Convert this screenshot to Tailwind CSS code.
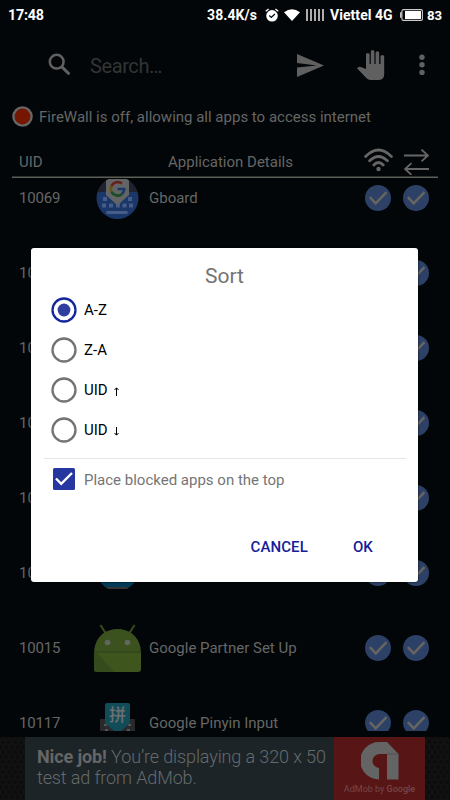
<!DOCTYPE html>
<html lang="en">
<head>
<meta charset="utf-8">
<title>FireWall</title>
<script src="https://cdn.jsdelivr.net/npm/@tailwindcss/browser@4"></script>
</head>
<body class="bg-[#020608]">
<svg class="hidden">
  <symbol id="check" viewBox="0 0 26 26"><circle cx="13" cy="13" r="13" fill="#2d4065"/><path d="M4.800 12.200l5.900 6.200L21.500 7.200" fill="none" stroke="#666561" stroke-width="2.500"/></symbol>
</svg>
<div class="relative flex h-[800px] w-[450px] flex-col overflow-hidden bg-[#020608] font-[Roboto,sans-serif] text-[15px] text-[#666]">
  <header class="flex h-[30px] shrink-0 items-center justify-between pl-2 pr-[8px] pt-[1px] text-[14px] font-bold text-white">
    <span class="w-9 text-[14.3px] tracking-[-0.2px]">17:48</span>
    <div class="flex items-center">
      <span class="w-[58px] text-[14px] tracking-[0.1px] whitespace-nowrap">38.4K/s</span>
      <svg class="-mt-[1px] h-[14px] w-[14px]" viewBox="0 0 14 14"><circle cx="7" cy="7.8" r="5.8" fill="#fff"/><path d="M.7 3.2L3.6 1M13.300 3.2L10.4 1" stroke="#fff" stroke-width="1.3"/><path d="M4.3 7.6l2 1.8 3.6-3.3" stroke="#020608" stroke-width="1.3" fill="none"/></svg>
      <svg class="-mt-[2px] ml-[5px] h-3 w-4" viewBox="0 0 16 12"><path d="M0 3.2Q8-2.8 16 3.2L8 12z" fill="#fff"/></svg>
      <svg class="-mt-[2px] ml-[6px] h-3 w-[18px]" viewBox="0 0 18 12"><path d="M1 0v12M5 0v12M9 0v12M13 0v12M17 0v12" stroke="#ccc" stroke-width="1.7"/></svg>
      <span class="ml-[6px] w-[65px] text-[14px] tracking-[0.05px] whitespace-nowrap">Viettel 4G</span>
      <svg class="-mt-[2px] ml-[5px] h-3 w-[23px]" viewBox="0 0 23 12"><rect x="1.9" y=".6" width="20.5" height="10.8" rx="1.5" fill="none" stroke="#ccc" stroke-width="1.1"/><path d="M.8 3.3v5.4" stroke="#ccc" stroke-width="1.5"/><rect x="5" y="2" width="16" height="8" fill="#fff"/></svg>
      <span class="ml-1 w-[15px] text-[13.2px]">83</span>
    </div>
  </header>
  <nav class="flex h-[70px] shrink-0 items-center pl-12">
    <svg class="-mt-[1px] h-[23px] w-[23px]" viewBox="0 0 23 23" fill="none" stroke="#606060"><circle cx="8.7" cy="8.7" r="6.9" stroke-width="2.5"/><path d="M13.6 13.6l7.8 7.7" stroke-width="3"/></svg>
    <span class="ml-[19px] mt-[2px] w-[207px] text-[20px] tracking-[-0.4px] text-[#323435]">Search…</span>
    <svg class="h-[23px] w-[27px]" viewBox="0 0 26 23" preserveAspectRatio="none"><path d="M0 0L26 11.5 0 23V13.5l19-2L0 9z" fill="#606060"/></svg>
    <svg class="ml-[33px] h-[30px] w-[28px]" viewBox="0 0 28 30"><path d="M9 19V4.8a1.8 1.8 0 0 1 3.6 0V14h1.2V1.8a1.8 1.8 0 0 1 3.6 0V14h1.2V3a1.8 1.8 0 0 1 3.6 0v11h1.3V6.9a1.8 1.8 0 0 1 3.7 0V24q0 6-6 6h-7.7q-2.400 0-4.200-2L0 18.3l1.2-1.100q1.200-.8 2.500-.2z" fill="#606060"/></svg>
    <svg class="ml-[34px] h-[22px] w-[6px]" viewBox="0 0 6 22" fill="#606060"><circle cx="3" cy="3.2" r="2.7"/><circle cx="3" cy="10.8" r="2.7"/><circle cx="3" cy="18.4" r="2.7"/></svg>
  </nav>
  <div class="flex h-[34px] shrink-0 items-center pl-3">
    <svg class="-mt-[2px] h-[21px] w-[21px]" viewBox="0 0 21 21"><circle cx="10.500" cy="10.500" r="9.100" fill="#751600" stroke="#666" stroke-width="2.400"/></svg>
    <span class="ml-[6px] mt-[1px] whitespace-nowrap text-[15px]">FireWall is off, allowing all apps to access internet</span>
  </div>
  <div class="mx-3 flex h-[44px] w-[426px] shrink-0 items-end border-b-[1px] border-[#5e5e59] shadow-[0_-0.5px_0_#5e5e59_inset]">
    <span class="ml-[7px] mb-[4px] w-[149px]">UID</span>
    <span class="mb-[4px] w-[196px]">Application Details</span>
    <svg class="mb-[5px] h-[24px] w-[29px]" viewBox="0 0 29 24" fill="none" stroke="#666" stroke-width="2.8" stroke-linecap="round"><path d="M1.6 8.500Q14.500-4.400 27.400 8.500M5.600 12.800Q14.500 4 23.400 12.800M9.800 17Q14.500 12 19.200 17"/><circle cx="14.500" cy="21" r="2.200" fill="#666" stroke="none"/></svg>
    <svg class="mb-[2px] ml-[11px] h-[26px] w-[25px]" viewBox="0 0 25 26" fill="none" stroke="#666" stroke-width="1.8"><path d="M0 6.500h24M17.500.6l6.400 5.900-6.400 5.900M25 20H1M7.500 14.100L1.100 20l6.400 5.900"/></svg>
  </div>
  <main class="mt-[1px] h-[552px] shrink-0 overflow-hidden">
    <div class="-mt-[19px] flex flex-col">
      <div class="flex h-[75px] items-center pl-[19px]">
        <span class="mt-[2px] w-[75px] tracking-[-0.2px]">10069</span>
        <svg class="h-[42px] w-[47px]" viewBox="0 0 47 42"><defs><clipPath id="gb"><circle cx="23.500" cy="21" r="21"/></clipPath></defs><g clip-path="url(#gb)"><path d="M0 0h47v15H0z" fill="#20232f"/><path d="M0 15h47v30H0z" fill="#1b3769"/><g fill="#465d88"><path d="M9 20h4v4H9zM34 20h4v4h-4zM8 26.500h4v4H8zM15 26.500h4v4h-4zM22 26.500h4v4h-4zM28.500 26.500h4v4h-4zM35 26.500h4v4h-4zM12.500 34h21v3h-21z"/></g><path d="M12 0h23v18L23.500 28.500 12 18z" fill="#636466"/></g><g fill="none" stroke-width="2.700"><path d="M17.500 9a7 7 0 0 1 10.500-2.500" stroke="#65201b"/><path d="M17.500 9a7 7 0 0 0 0 6" stroke="#665017"/><path d="M17.500 15a7 7 0 0 0 10.500 2" stroke="#174d27"/><path d="M28 17q2.300-2 2.200-5H23.500" stroke="#1b3868"/></g></svg>
        <span class="ml-[8px] mt-[2px] w-[216px]">Gboard</span>
        <svg class="h-[26px] w-[26px]"><use href="#check"/></svg><svg class="ml-[12px] h-[26px] w-[26px]"><use href="#check"/></svg>
      </div>
      <div class="flex h-[75px] items-center pl-[19px]"><span class="mt-[2px] w-[346px]">10070</span><svg class="h-[26px] w-[26px]"><use href="#check"/></svg><svg class="ml-[12px] h-[26px] w-[26px]"><use href="#check"/></svg></div>
      <div class="flex h-[75px] items-center pl-[19px]"><span class="mt-[2px] w-[346px]">10071</span><svg class="h-[26px] w-[26px]"><use href="#check"/></svg><svg class="ml-[12px] h-[26px] w-[26px]"><use href="#check"/></svg></div>
      <div class="flex h-[75px] items-center pl-[19px]"><span class="mt-[2px] w-[346px]">10072</span><svg class="h-[26px] w-[26px]"><use href="#check"/></svg><svg class="ml-[12px] h-[26px] w-[26px]"><use href="#check"/></svg></div>
      <div class="flex h-[75px] items-center pl-[19px]"><span class="mt-[2px] w-[346px]">10073</span><svg class="h-[26px] w-[26px]"><use href="#check"/></svg><svg class="ml-[12px] h-[26px] w-[26px]"><use href="#check"/></svg></div>
      <div class="flex h-[75px] items-center pl-[19px]">
        <span class="mt-[2px] w-[75px]">10074</span>
        <svg class="h-[36px] w-[47px]" viewBox="0 0 47 36"><path d="M7 18h33v9q0 1-7 7H14q-7-6-7-7z" fill="#353535"/><path d="M7 8h33v20l-4 4H11l-4-4z" fill="#003a57"/></svg>
        <span class="w-[224px]"></span>
        <svg class="h-[26px] w-[26px]"><use href="#check"/></svg><svg class="ml-[12px] h-[26px] w-[26px]"><use href="#check"/></svg>
      </div>
      <div class="flex h-[75px] items-center pl-[19px]">
        <span class="mt-[2px] w-[75px] tracking-[-0.2px]">10015</span>
        <svg class="h-[48px] w-[47px]" viewBox="0 0 47 48"><path d="M6.500 1l5 8M40.500 1l-5 8" stroke="#384b1d" stroke-width="2"/><path d="M0 28Q.5 16 9 9.500 15.500 5 23.500 5T38 9.500Q46.500 16 47 28z" fill="#3c521e"/><path d="M0 28h47v17q0 3-3 3H3q-3 0-3-3z" fill="#3e551e"/><path d="M3 29l17 19H3q-3 0-3-3V29z" fill="#364b1c"/><path d="M0 28h47" stroke="#2d3e18"/><circle cx="13.500" cy="18.500" r="2.800" fill="#626560"/><circle cx="33.500" cy="18.500" r="2.800" fill="#626560"/></svg>
        <span class="ml-[8px] mt-[2px] w-[216px]">Google Partner Set Up</span>
        <svg class="h-[26px] w-[26px]"><use href="#check"/></svg><svg class="ml-[12px] h-[26px] w-[26px]"><use href="#check"/></svg>
      </div>
      <div class="flex h-[75px] items-center pl-[19px]">
        <span class="mt-[2px] w-[75px] tracking-[-0.2px]">10117</span>
        <svg class="h-[40px] w-[47px]" viewBox="0 0 47 40"><rect x="6" y="16" width="35" height="22" rx="1" fill="#29292b"/><path d="M10 21h3v2h-3zM34 21h3v2h-3zM11 26h3v2h-3zM33 26h3v2h-3z" fill="#555"/><path d="M13 0h21q2 0 2 2v18L27 28h-7l-9-8V2q0-2 2-2z" fill="#124c59"/><text x="23.500" y="18" text-anchor="middle" font-size="17" font-weight="500" font-family="Noto Sans CJK SC, sans-serif" fill="#6b7173">拼</text></svg>
        <span class="ml-[8px] mt-[2px] w-[216px]">Google Pinyin Input</span>
        <svg class="h-[26px] w-[26px]"><use href="#check"/></svg><svg class="ml-[12px] h-[26px] w-[26px]"><use href="#check"/></svg>
      </div>
    </div>
  </main>
  <footer class="mt-[6px] flex h-[63px] shrink-0 bg-[#141414] bg-[radial-gradient(circle,#0d0d0d_30%,transparent_55%),radial-gradient(circle,#0d0d0d_30%,transparent_55%)] bg-[length:6px_10px] bg-[position:0_0,3px_5px] px-[25px]">
    <div class="w-[309px] bg-[#1c2427] pl-3 pt-[9px] text-[18px] font-light leading-[21px] tracking-[-0.12px] text-[#656a6c]"><p class="whitespace-nowrap"><b class="font-bold text-[#666]">Nice job!</b> You’re displaying a 320 x 50</p><p>test ad from AdMob.</p></div>
    <div class="flex w-[91px] flex-col items-center bg-[#581516] pt-[5px]">
      <svg class="h-[38px] w-[38px]" viewBox="0 0 38 38"><path d="M18 37.500A18.500 18.500 0 0 1 18 0h8L37.500 12v25.500H26V12h-7a7 7 0 0 0-1 14z" fill="#646464"/><path d="M26 12h11.500" stroke="#505050"/></svg>
      <span class="whitespace-nowrap text-[9px] leading-[19px] text-[#744747]">AdMob by <b class="font-medium">Google</b></span>
    </div>
  </footer>

  <section class="absolute left-[31px] top-[248px] flex h-[334px] w-[387px] flex-col rounded-[3px] bg-white text-black shadow-[0_0_2px_#000]">
    <h1 class="pt-[15px] text-center text-[21px] leading-[27px] text-[#737373]">Sort</h1>
    <div class="flex flex-col pl-[20px]">
      <label class="flex h-10 items-center gap-[7px]"><svg class="h-[26px] w-[26px]" viewBox="0 0 26 26"><circle cx="13" cy="13" r="11.500" fill="none" stroke="#14279b" stroke-width="2.300"/><circle cx="13" cy="13" r="6.400" fill="#303f9f"/></svg>A-Z</label>
      <label class="flex h-10 items-center gap-[7px]"><svg class="h-[26px] w-[26px]" viewBox="0 0 26 26"><circle cx="13" cy="13" r="11.500" fill="none" stroke="#737373" stroke-width="2.300"/></svg>Z-A</label>
      <label class="flex h-10 items-center gap-[7px]"><svg class="h-[26px] w-[26px]" viewBox="0 0 26 26"><circle cx="13" cy="13" r="11.500" fill="none" stroke="#737373" stroke-width="2.300"/></svg><span class="flex items-center gap-[6px]">UID <svg class="mt-[2px] h-[9px] w-[5px]" viewBox="0 0 5 9" fill="none" stroke="#000"><path d="M2.500 9V1M.5 3l2-2.200 2 2.200"/></svg></span></label>
      <label class="flex h-10 items-center gap-[7px]"><svg class="h-[26px] w-[26px]" viewBox="0 0 26 26"><circle cx="13" cy="13" r="11.500" fill="none" stroke="#737373" stroke-width="2.300"/></svg><span class="flex items-center gap-[6px]">UID <svg class="mt-[2px] h-[9px] w-[5px]" viewBox="0 0 5 9" fill="none" stroke="#000"><path d="M2.500 0v8M.5 6l2 2.200 2-2.200"/></svg></span></label>
    </div>
    <div class="ml-[13px] mr-[12px] mt-[8px] h-px bg-[#e2e6e9]"></div>
    <label class="flex h-[42px] items-center gap-[9px] pl-[22px] text-[#757575]"><svg class="-mt-[2px] h-[22px] w-[22px]" viewBox="0 0 22 22"><rect width="22" height="22" rx="1.500" fill="#2737a0"/><path d="M3 10.500l5.200 5.300L19 5" fill="none" stroke="#fff" stroke-width="2.400"/></svg>Place blocked apps on the top</label>
    <div class="mt-[34px] flex h-[24px] items-center text-[15px] font-medium text-[#14209a]"><span class="ml-[219.500px] w-[102.500px] tracking-[0.1px]">CANCEL</span><span>OK</span></div>
  </section>
</div>
</body>
</html>
